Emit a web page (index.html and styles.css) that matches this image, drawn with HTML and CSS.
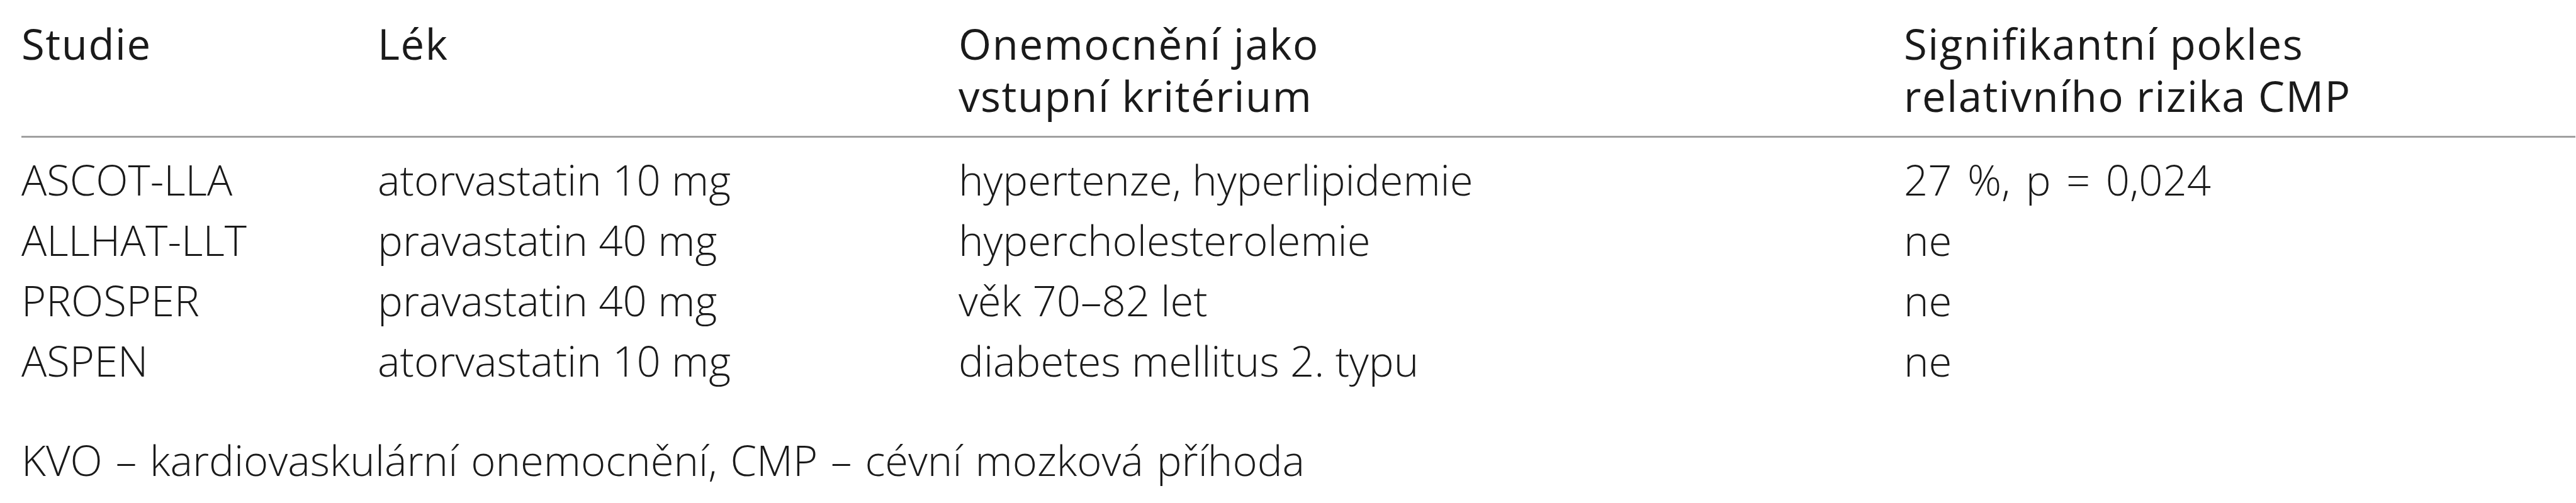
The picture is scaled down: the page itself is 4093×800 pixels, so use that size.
FILE: index.html
```html
<!DOCTYPE html>
<html lang="cs">
<head>
<meta charset="utf-8">
<title>Studie statinů a CMP</title>
<link rel="stylesheet" href="styles.css">
</head>
<body>
<div class="page">
  <table class="data">
    <colgroup>
      <col class="c1"><col class="c2"><col class="c3"><col class="c4">
    </colgroup>
    <thead>
      <tr>
        <th>Studie</th>
        <th>Lék</th>
        <th>Onemocnění jako<br>vstupní kritérium</th>
        <th>Signifikantní pokles<br>relativního rizika CMP</th>
      </tr>
    </thead>
    <tbody>
      <tr class="first"><td>ASCOT-LLA</td><td>atorvastatin 10 mg</td><td>hypertenze, hyperlipidemie</td><td class="num">27 %, p = 0,024</td></tr>
      <tr><td>ALLHAT-LLT</td><td>pravastatin 40 mg</td><td>hypercholesterolemie</td><td>ne</td></tr>
      <tr><td>PROSPER</td><td>pravastatin 40 mg</td><td>věk 70–82 let</td><td>ne</td></tr>
      <tr><td>ASPEN</td><td>atorvastatin 10 mg</td><td>diabetes mellitus 2. typu</td><td>ne</td></tr>
    </tbody>
  </table>
  <p class="note">KVO – kardiovaskulární onemocnění, CMP – cévní mozková příhoda</p>
</div>
</body>
</html>
```
FILE: styles.css
```css
html, body {
  margin: 0;
  padding: 0;
  background: #ffffff;
}
.page {
  padding: 28px 1px 0 34px;
  font-family: "Open Sans", "Noto Sans", sans-serif;
  font-size: 67px;
  color: #1a1a1a;
}
.data {
  width: 100%;
  border-collapse: collapse;
  table-layout: fixed;
}
.c1 { width: 566px; }
.c2 { width: 923px; }
.c3 { width: 1502px; }
.c4 { width: auto; }
.data th {
  font-weight: 400;
  letter-spacing: 1.6px;
  text-align: left;
  vertical-align: top;
  line-height: 83px;
  padding: 0 0 22px 0;
  border-bottom: 3px solid #a0a0a0;
}
.data td {
  font-weight: 300;
  text-align: left;
  vertical-align: top;
  line-height: 96px;
  padding: 0;
  white-space: nowrap;
}
.data td.num {
  word-spacing: 7px;
}
.data tr.first td {
  padding-top: 18px;
}
.note {
  font-weight: 300;
  word-spacing: 3.5px;
  margin: 62px 0 0 0;
  line-height: 96px;
}
```
